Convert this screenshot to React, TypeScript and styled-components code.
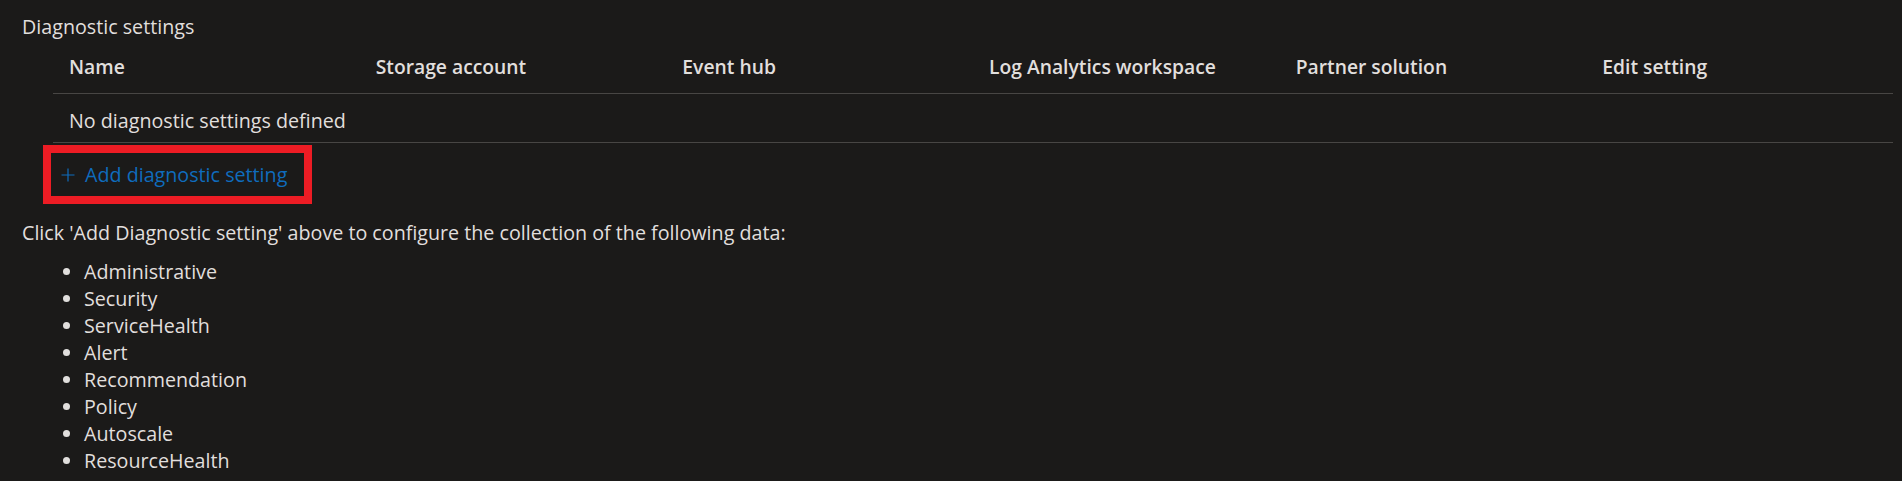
import React from "react";
import styled, { createGlobalStyle } from "styled-components";

const GlobalStyle = createGlobalStyle`
  html, body {
    margin: 0;
    padding: 0;
    background: #1b1a19;
  }
  body {
    font-family: "Open Sans", "Noto Sans", sans-serif;
    color: #e1dfdd;
  }
`;

const Page = styled.main`
  padding: 13px 9px 0 22px;
  font-size: 19.7px;
  line-height: 27px;
`;

const Title = styled.h2`
  margin: 0;
  font-size: 19.7px;
  font-weight: 400;
  line-height: 27px;
`;

const Table = styled.div`
  margin-left: 31px;
  width: 1840px;
`;

const Row = styled.div<{ $header?: boolean }>`
  display: grid;
  grid-template-columns: repeat(6, 1fr);
  align-items: center;
  height: ${({ $header }) => ($header ? "54px" : "49px")};
  padding-top: ${({ $header }) => ($header ? "0" : "5px")};
  box-sizing: border-box;
  border-bottom: 1px solid #484644;
`;

const HeaderCell = styled.div`
  padding-left: 16px;
  font-size: 19.3px;
  font-weight: 600;
  white-space: nowrap;
`;

const EmptyCell = styled.div`
  grid-column: 1 / -1;
  padding-left: 16px;
`;

const Highlight = styled.div`
  display: inline-flex;
  margin: 2px 0 0 21px;
  border: 8px solid #ed1c24;
  height: 43px;
  align-items: center;
  padding: 0 17px 0 10px;
`;

const AddLink = styled.a`
  display: inline-flex;
  align-items: center;
  gap: 10px;
  color: #0f6cbd;
  text-decoration: none;
  cursor: pointer;
`;

const Hint = styled.p`
  margin: 15px 0 0 0;
`;

const DataList = styled.ul`
  margin: 12px 0 0 0;
  padding-left: 62px;
  list-style: disc;
`;

const columns = [
  "Name",
  "Storage account",
  "Event hub",
  "Log Analytics workspace",
  "Partner solution",
  "Edit setting",
];

const categories = [
  "Administrative",
  "Security",
  "ServiceHealth",
  "Alert",
  "Recommendation",
  "Policy",
  "Autoscale",
  "ResourceHealth",
];

const PlusIcon = () => (
  <svg width="14" height="14" viewBox="0 0 14 14" fill="none">
    <path d="M7 0.5v13M0.5 7h13" stroke="currentColor" strokeWidth="1.2" />
  </svg>
);

export default function App() {
  return (
    <>
      <GlobalStyle />
      <Page>
        <Title>Diagnostic settings</Title>
        <Table>
          <Row $header>
            {columns.map((c) => (
              <HeaderCell key={c}>{c}</HeaderCell>
            ))}
          </Row>
          <Row>
            <EmptyCell>No diagnostic settings defined</EmptyCell>
          </Row>
        </Table>
        <Highlight>
          <AddLink>
            <PlusIcon />
            Add diagnostic setting
          </AddLink>
        </Highlight>
        <Hint>
          Click 'Add Diagnostic setting' above to configure the collection of the
          following data:
        </Hint>
        <DataList>
          {categories.map((c) => (
            <li key={c}>{c}</li>
          ))}
        </DataList>
      </Page>
    </>
  );
}
